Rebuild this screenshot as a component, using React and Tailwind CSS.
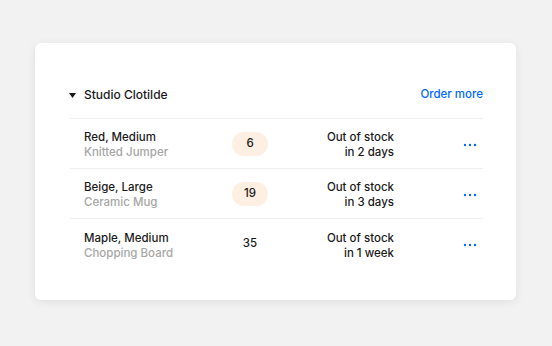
export default function App() {
  const rows = [
    { name: "Red, Medium", sub: "Knitted Jumper", qty: "6", badge: true, when: "in 2 days" },
    { name: "Beige, Large", sub: "Ceramic Mug", qty: "19", badge: true, when: "in 3 days" },
    { name: "Maple, Medium", sub: "Chopping Board", qty: "35", badge: false, when: "in 1 week" },
  ];
  return (
    <div
      className="w-[552px] h-[346px] bg-[#f2f2f2] pt-[43px] pl-[35px]"
      style={{ fontFamily: "Inter, 'Noto Sans', sans-serif" }}
    >
      <div className="w-[481px] h-[257px] bg-white rounded-[6px] shadow-[0_2px_10px_rgba(0,0,0,0.08)] pl-[35px] pr-[33px] pt-[34px]">
        <div className="flex items-center h-[42px] pb-[5px] border-b border-[#f0f0f0]">
          <div className="w-[14px] flex items-center">
            <svg width="7" height="5" viewBox="0 0 7 5" className="ml-[-1px]">
              <path d="M0 0 H7 L3.5 5 Z" fill="#1a1a1a" />
            </svg>
          </div>
          <div className="flex-1 text-[12px] font-medium text-[#1a1a1a]">Studio Clotilde</div>
          <div className="text-[11.5px] font-medium text-[#006aff]">Order more</div>
        </div>
        {rows.map((r, i) => (
          <div
            key={i}
            className={`flex items-center h-[50px] pl-[14px] ${i < rows.length - 1 ? "border-b border-[#f0f0f0]" : ""}`}
          >
            <div className="w-[148px] mt-[3px] text-[11.5px] leading-[15px] font-medium">
              <div className="text-[#1a1a1a]">{r.name}</div>
              <div className="text-[#a6a6a6]">{r.sub}</div>
            </div>
            <div
              className={`w-[36px] h-[24px] rounded-full flex items-center justify-center text-[11.5px] font-medium text-[#1a1a1a] ${r.badge ? "bg-[#fdefe1]" : ""}`}
            >
              {r.qty}
            </div>
            <div className="w-[126px] mt-[3px] text-right text-[11.5px] leading-[15px] font-medium text-[#1a1a1a]">
              <div>Out of stock</div>
              <div>{r.when}</div>
            </div>
            <div className="flex-1 flex justify-end pr-[6px] mt-[2px]">
              <svg width="14" height="4" viewBox="0 0 14 4">
                <circle cx="2" cy="2" r="1.2" fill="#006aff" />
                <circle cx="7" cy="2" r="1.2" fill="#006aff" />
                <circle cx="12" cy="2" r="1.2" fill="#006aff" />
              </svg>
            </div>
          </div>
        ))}
      </div>
    </div>
  );
}
